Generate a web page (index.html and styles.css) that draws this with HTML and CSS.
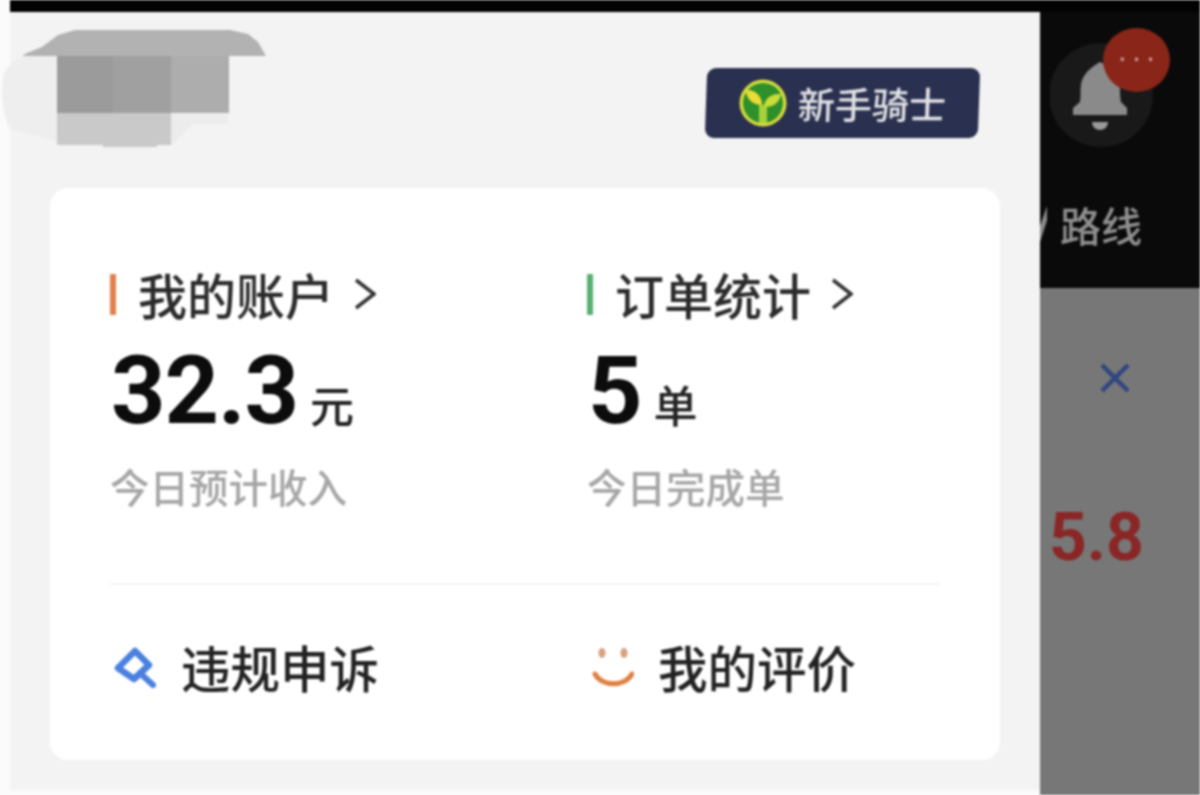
FILE: index.html
```html
<!DOCTYPE html>
<html lang="zh-CN">
<head>
<meta charset="utf-8">
<title>骑士中心</title>
<link rel="stylesheet" href="styles.css">
</head>
<body>
<div class="screen">
  <div class="topbar"></div>
  <div class="content">
    <aside class="drawer">
      <svg class="redact" viewBox="0 0 270 125" width="270" height="125" aria-hidden="true">
        <path d="M4 45C0 60 2 85 10 100L57 112V27H30C14 30 8 36 4 45Z" fill="#eeeeef"/>
        <path d="M171 85H228V95H192L172 116H171Z" fill="#ececec"/>
        <path d="M22 27L27 24L42 18L58 6L75 1H230L248 5L258 13L266 27Z" fill="#b2b2b2"/>
        <rect x="57" y="27" width="56" height="57" fill="#9b9b9b"/>
        <rect x="113" y="27" width="58" height="57" fill="#a0a0a0"/>
        <rect x="171" y="27" width="58" height="57" fill="#adadad"/>
        <path d="M57 84H171V116H157V118H103V116H57Z" fill="#c9c9c9"/>
      </svg>
      <header class="drawer-head">
        <div class="badge">
          <svg class="badge-icon" viewBox="0 0 48 48" width="48" height="48" aria-hidden="true">
            <circle cx="24" cy="24" r="23.5" fill="#d7dc3f"/>
            <circle cx="24" cy="24" r="20" fill="#2f8f2a"/>
            <path d="M20 44V26h8v18Z" fill="#a6d23a"/>
            <path d="M23 26C14 26 7 20 7 11C16 10 23 17 23 26Z" fill="#ecdc35"/>
            <path d="M25 28C25 20 32 14 42 15C41 23 34 29 25 28Z" fill="#c9dc3a"/>
          </svg>
          <span class="badge-text">新手骑士</span>
        </div>
      </header>
      <section class="card">
        <div class="stats">
          <div class="stat">
            <div class="stat-title">
              <span class="mark mark-orange"></span>
              <span>我的账户</span>
              <svg class="chevron" viewBox="0 0 22 34" width="22" height="34" aria-hidden="true"><path d="M2 3L20 17L2 31" fill="none" stroke="#333" stroke-width="3.5"/></svg>
            </div>
            <div class="stat-value"><span class="num">32.3</span><span class="unit">元</span></div>
            <div class="stat-note">今日预计收入</div>
          </div>
          <div class="stat">
            <div class="stat-title">
              <span class="mark mark-green"></span>
              <span>订单统计</span>
              <svg class="chevron" viewBox="0 0 22 34" width="22" height="34" aria-hidden="true"><path d="M2 3L20 17L2 31" fill="none" stroke="#333" stroke-width="3.5"/></svg>
            </div>
            <div class="stat-value"><span class="num">5</span><span class="unit">单</span></div>
            <div class="stat-note">今日完成单</div>
          </div>
        </div>
        <div class="links">
          <div class="link">
            <svg class="link-icon" viewBox="0 0 44 44" width="44" height="44" aria-hidden="true">
              <path d="M5 23L22 6L36 20L21 34Z" fill="none" stroke="#4a80e0" stroke-width="6.5" stroke-linejoin="round"/>
              <path d="M27 28L40 40" fill="none" stroke="#4a80e0" stroke-width="6" stroke-linecap="round"/>
            </svg>
            <span>违规申诉</span>
          </div>
          <div class="link">
            <svg class="link-icon" viewBox="0 0 44 44" width="44" height="44" aria-hidden="true">
              <ellipse cx="12" cy="8" rx="3.5" ry="5" fill="#d9a080"/>
              <ellipse cx="34" cy="8" rx="3.5" ry="5" fill="#d9a080"/>
              <path d="M5 29C12 42 35 42 42 29" fill="none" stroke="#e08040" stroke-width="5" stroke-linecap="round"/>
            </svg>
            <span>我的评价</span>
          </div>
        </div>
      </section>
    </aside>
    <div class="side">
      <div class="side-dark">
        <div class="bell-wrap">
          <svg viewBox="0 0 104 106" width="104" height="106" aria-hidden="true">
            <circle cx="51" cy="53" r="52" fill="#191919"/>
            <path d="M23 66L30 60C31 54 30 48 31 42C33 32 40 26 50 20L62 26C68 32 70 38 70 46C70 52 70 56 71 60L77 66V73H23Z" fill="#8a8a8a"/>
            <path d="M42 80H58C58 85 54 88 50 88C46 88 42 85 42 80Z" fill="#9a9a9a"/>
          </svg>
          <span class="dot-badge">...</span>
        </div>
        <div class="route"><i class="route-cut"></i><span>路线</span></div>
      </div>
      <div class="side-dim">
        <svg class="close" viewBox="0 0 32 32" width="32" height="32" aria-hidden="true"><path d="M3 3L29 29M29 3L3 29" fill="none" stroke="#2f4680" stroke-width="4.5"/></svg>
        <div class="price">5.8</div>
      </div>
    </div>
  </div>
</div>
</body>
</html>
```

FILE: styles.css
```css
* { box-sizing: border-box; }
html, body { margin: 0; height: 100%; background: #fbfbfb; overflow: hidden; }
body { font-family: "Noto Sans CJK SC", "Noto Sans", sans-serif; font-weight: 500; }

.screen {
  width: 1200px;
  height: 795px;
  display: flex;
  flex-direction: column;
  padding-left: 10px;
  filter: blur(0.8px);
}
.topbar { height: 12px; flex: none; background: #020202; }
.content { flex: 1; display: flex; min-height: 0; }

.drawer {
  position: relative;
  width: 1030px;
  flex: none;
  background: #f3f3f4;
  border-bottom: 5px solid #fbfbfb;
  padding: 0 40px;
}
.redact { position: absolute; left: -10px; top: 17px; }

.drawer-head {
  height: 176px;
  padding: 56px 21px 0 0;
  display: flex;
  justify-content: flex-end;
  align-items: flex-start;
}
.badge {
  width: 273px;
  height: 70px;
  background: #2a304f;
  border-radius: 9px;
  transform: skewX(-2deg);
  display: flex;
  align-items: center;
  gap: 11px;
  padding-left: 33px;
}
.badge-icon { transform: skewX(2deg); flex: none; }
.badge-text { color: #e2e3e6; font-size: 37px; line-height: 1; white-space: nowrap; }

.card {
  width: 950px;
  height: 572px;
  background: #fff;
  border-radius: 18px;
  padding: 76px 60px 0;
}
.stats {
  display: grid;
  grid-template-columns: 477px 1fr;
  height: 321px;
  border-bottom: 2px solid #f4f4f4;
}
.stat-title {
  display: flex;
  align-items: center;
  height: 60px;
  font-size: 49px;
  line-height: 60px;
  color: #2b2b2b;
}
.mark { width: 6px; height: 41px; margin-right: 22px; border-radius: 1px; }
.mark-orange { background: #e0804c; }
.mark-green { background: #58b070; }
.chevron { margin-left: 20px; }

.stat-value {
  display: flex;
  align-items: baseline;
  height: 100px;
  margin-top: 17px;
  padding-left: 1px;
  color: #0c0c0c;
}
.num {
  font-family: Roboto, "Liberation Sans", sans-serif;
  font-weight: 700;
  font-size: 95px;
  line-height: 100px;
  letter-spacing: -1px;
}
.unit { font-size: 44px; line-height: 1; margin-left: 12px; color: #222; }
.stat-note { margin-top: 17px; font-size: 39.5px; line-height: 56px; color: #a6a6a6; white-space: nowrap; }

.links { display: grid; grid-template-columns: 477px 1fr; padding-top: 52px; }
.link {
  display: flex;
  align-items: center;
  height: 60px;
  gap: 24px;
  padding-left: 3px;
  font-size: 49.5px;
  line-height: 60px;
  color: #222;
}
.link-icon { flex: none; }

.side { flex: 1; display: flex; flex-direction: column; min-width: 0; overflow: hidden; }
.side-dark { height: 276px; flex: none; background: #0a0a0a; padding: 30px 0 0 10px; }
.bell-wrap { position: relative; width: 104px; height: 106px; }
.dot-badge {
  position: absolute;
  left: 53px;
  top: -14px;
  width: 67px;
  height: 64px;
  border-radius: 50%;
  background: #892519;
  color: #d09a94;
  font-family: "Liberation Sans", sans-serif;
  font-weight: 700;
  font-size: 22px;
  line-height: 52px;
  text-align: center;
  letter-spacing: 8px;
  text-indent: 8px;
}
.route {
  display: flex;
  align-items: center;
  margin: 47px 0 0 -10px;
  height: 58px;
  font-size: 41px;
  line-height: 58px;
  color: #8f8f8f;
}
.route-cut { width: 7px; height: 36px; background: #8a8a8a; margin-right: 13px; clip-path: polygon(0 55%, 100% 0, 100% 40%, 0 100%); }

.side-dim { flex: 1; background: #777777; padding: 74px 0 0 9px; }
.close { display: block; margin-left: 50px; }
.price {
  margin-top: 109px;
  font-family: Roboto, "Liberation Sans", sans-serif;
  font-weight: 700;
  font-size: 66px;
  line-height: 70px;
  color: #8a2626;
}
```
